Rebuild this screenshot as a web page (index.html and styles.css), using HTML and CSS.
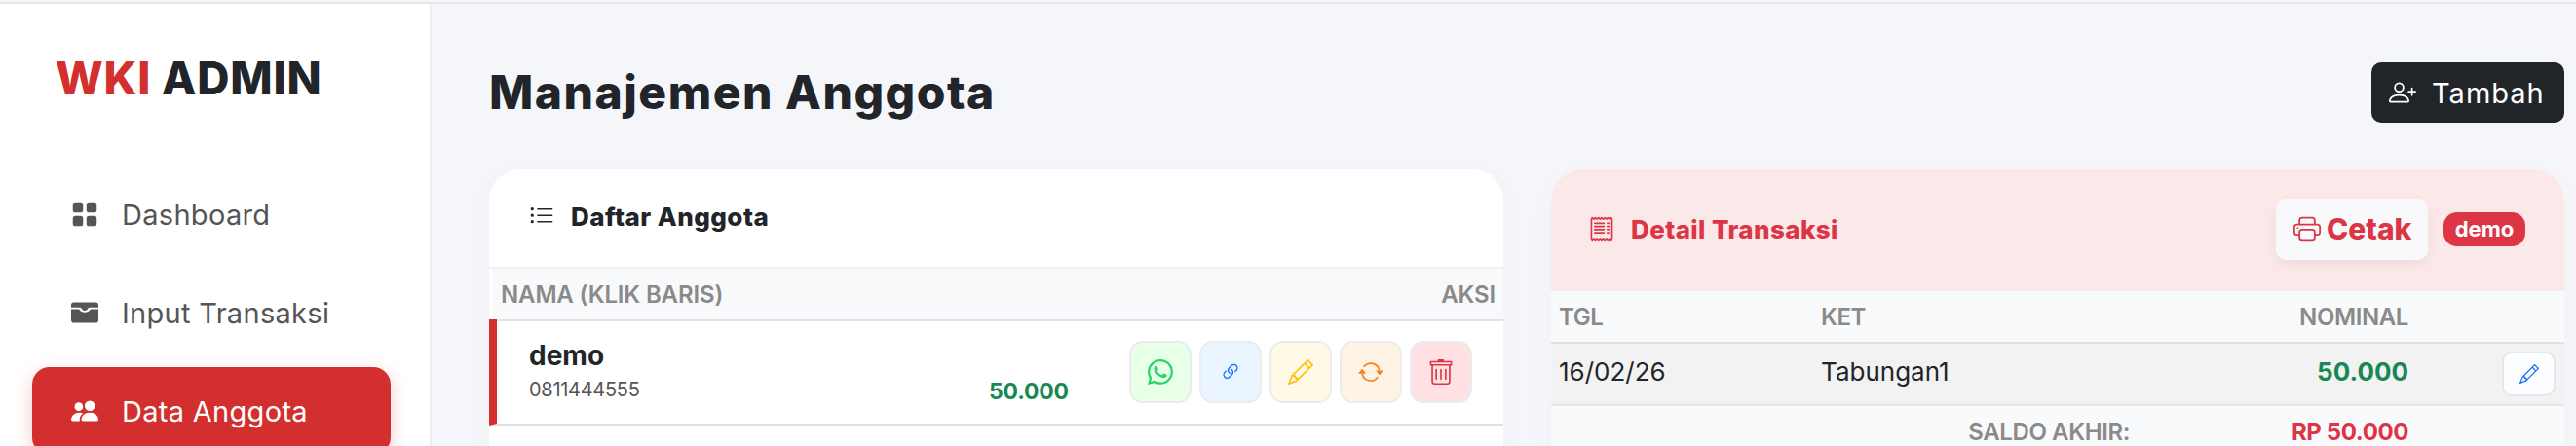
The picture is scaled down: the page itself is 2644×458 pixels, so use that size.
FILE: index.html
```html
<!DOCTYPE html>
<html lang="id">
<head>
<meta charset="utf-8">
<title>Manajemen Anggota</title>
<link rel="stylesheet" href="styles.css">
</head>
<body>
<div class="app">
  <aside class="sidebar">
    <div class="logo"><span class="logo-red">WKI</span> ADMIN</div>
    <nav class="nav">
      <a class="nav-item">
        <svg class="nav-icon" viewBox="0 0 16 16"><path d="M1 2.5A1.5 1.5 0 0 1 2.5 1h3A1.5 1.5 0 0 1 7 2.5v3A1.5 1.5 0 0 1 5.5 7h-3A1.5 1.5 0 0 1 1 5.5zm8 0A1.5 1.5 0 0 1 10.5 1h3A1.5 1.5 0 0 1 15 2.5v3A1.5 1.5 0 0 1 13.5 7h-3A1.5 1.5 0 0 1 9 5.5zm-8 8A1.5 1.5 0 0 1 2.5 9h3A1.5 1.5 0 0 1 7 10.5v3A1.5 1.5 0 0 1 5.5 15h-3A1.5 1.5 0 0 1 1 13.5zm8 0A1.5 1.5 0 0 1 10.5 9h3a1.5 1.5 0 0 1 1.5 1.5v3a1.5 1.5 0 0 1-1.5 1.5h-3A1.5 1.5 0 0 1 9 13.5z"/></svg>
        <span>Dashboard</span>
      </a>
      <a class="nav-item">
        <svg class="nav-icon" viewBox="0 0 16 16"><path d="M1.6 2h12.8A1.6 1.6 0 0 1 16 3.6V5h-5.2c-.4 0-.7.2-.9.6-.3.8-1 1.2-1.9 1.2s-1.6-.4-1.9-1.2C5.9 5.2 5.600 5 5.200 5H0V3.600A1.600 1.600 0 0 1 1.600 2zM0 6h4.700c.6 1.200 1.900 1.900 3.300 1.900s2.700-.7 3.300-1.900H16v6.400a1.600 1.600 0 0 1-1.600 1.600H1.600A1.600 1.600 0 0 1 0 12.400z"/></svg>
        <span>Input Transaksi</span>
      </a>
      <a class="nav-item nav-active">
        <svg class="nav-icon" viewBox="0 0 16 16"><path d="M7 14s-1 0-1-1 1-4 5-4 5 3 5 4-1 1-1 1zm4-6a3 3 0 1 0 0-6 3 3 0 0 0 0 6m-5.784 6A2.24 2.24 0 0 1 5 13c0-1.355.68-2.75 1.936-3.72A6.3 6.3 0 0 0 5 9c-4 0-5 3-5 4s1 1 1 1zM4.500 8a2.500 2.500 0 1 0 0-5 2.500 2.500 0 0 0 0 5"/></svg>
        <span>Data Anggota</span>
      </a>
    </nav>
  </aside>
  <main class="main">
    <header class="page-head">
      <h1 class="page-title">Manajemen Anggota</h1>
      <button class="btn-add">
        <svg class="add-icon" viewBox="0 0 16 16"><path d="M6 8a3 3 0 1 0 0-6 3 3 0 0 0 0 6m2-3a2 2 0 1 1-4 0 2 2 0 0 1 4 0m4 8c0 1-1 1-1 1H1s-1 0-1-1 1-4 6-4 6 3 6 4m-1-.004c-.001-.246-.154-.986-.832-1.664C9.516 10.68 8.289 10 6 10s-3.516.68-4.168 1.332c-.678.678-.83 1.418-.832 1.664z"/><path d="M13.500 5a.5.5 0 0 1 .5.5V7h1.500a.5.5 0 0 1 0 1H14v1.500a.5.5 0 0 1-1 0V8h-1.500a.5.5 0 0 1 0-1H13V5.500a.5.5 0 0 1 .5-.5"/></svg>
        <span>Tambah</span>
      </button>
    </header>
    <div class="columns">
      <section class="card">
        <div class="member-head">
          <svg class="list-icon" viewBox="0 0 16 16"><path d="M5 11.500a.5.5 0 0 1 .5-.5h9a.5.5 0 0 1 0 1h-9a.5.5 0 0 1-.5-.5m0-4a.5.5 0 0 1 .5-.5h9a.5.5 0 0 1 0 1h-9a.5.5 0 0 1-.5-.5m0-4a.5.5 0 0 1 .5-.5h9a.5.5 0 0 1 0 1h-9a.5.5 0 0 1-.5-.5m-3 1a1 1 0 1 0 0-2 1 1 0 0 0 0 2m0 4a1 1 0 1 0 0-2 1 1 0 0 0 0 2m0 4a1 1 0 1 0 0-2 1 1 0 0 0 0 2"/></svg>
          <h2 class="member-title">Daftar Anggota</h2>
        </div>
        <div class="member-thead">
          <span class="th">NAMA (KLIK BARIS)</span>
          <span class="th">AKSI</span>
        </div>
        <div class="member-row">
          <div class="member-id">
            <div class="member-name">demo</div>
            <div class="member-phone">0811444555</div>
          </div>
          <div class="member-amount">50.000</div>
          <div class="actions">
            <button class="act act-wa"><svg class="act-icon" viewBox="0 0 16 16"><path d="M13.601 2.326A7.85 7.85 0 0 0 7.994 0C3.627 0 .068 3.558.064 7.926c0 1.399.366 2.76 1.057 3.965L0 16l4.204-1.102a7.9 7.9 0 0 0 3.79.965h.004c4.368 0 7.926-3.558 7.93-7.93A7.9 7.9 0 0 0 13.6 2.326zM7.994 14.521a6.600 6.600 0 0 1-3.356-.92l-.24-.144-2.494.654.666-2.433-.156-.251a6.560 6.560 0 0 1-1.007-3.505c0-3.626 2.957-6.584 6.591-6.584a6.560 6.560 0 0 1 4.660 1.931 6.560 6.560 0 0 1 1.928 4.660c-.004 3.639-2.961 6.592-6.592 6.592m3.615-4.934c-.197-.099-1.17-.578-1.353-.646-.182-.065-.315-.099-.445.099-.133.197-.513.646-.627.775-.114.133-.232.148-.43.05-.197-.1-.836-.308-1.592-.985-.59-.525-.985-1.175-1.103-1.372-.114-.198-.011-.304.088-.403.087-.088.197-.232.296-.346.1-.114.133-.198.198-.33.065-.134.034-.248-.015-.347-.05-.099-.445-1.076-.612-1.47-.16-.389-.323-.335-.445-.34-.114-.007-.247-.007-.38-.007a.73.73 0 0 0-.529.247c-.182.198-.691.677-.691 1.654s.71 1.916.81 2.049c.098.133 1.394 2.132 3.383 2.992.47.205.84.326 1.129.418.475.152.904.129 1.246.08.38-.058 1.171-.48 1.338-.943.164-.464.164-.86.114-.943-.049-.084-.182-.133-.38-.232"/></svg></button>
            <button class="act act-link"><svg class="act-icon" viewBox="0 0 16 16"><path d="M4.715 6.542 3.343 7.914a3 3 0 1 0 4.243 4.243l1.828-1.829A3 3 0 0 0 8.586 5.500L8 6.086a1 1 0 0 0-.154.199 2 2 0 0 1 .861 3.337L6.88 11.450a2 2 0 1 1-2.830-2.830l.793-.792a4 4 0 0 1-.128-1.287z"/><path d="M6.586 4.672A3 3 0 0 0 7.414 9.500l.775-.776a2 2 0 0 1-.896-3.346L9.120 3.550a2 2 0 1 1 2.830 2.830l-.793.792c.112.42.155.855.128 1.287l1.372-1.372a3 3 0 1 0-4.243-4.243z"/></svg></button>
            <button class="act act-edit"><svg class="act-icon" viewBox="0 0 16 16"><path d="M12.146.146a.5.5 0 0 1 .708 0l3 3a.5.5 0 0 1 0 .708l-10 10a.5.5 0 0 1-.168.11l-5 2a.5.5 0 0 1-.65-.65l2-5a.5.5 0 0 1 .11-.168zM11.207 2.500 13.500 4.793 14.793 3.500 12.500 1.207zm1.586 3L10.500 3.207 4 9.707V10h.5a.5.5 0 0 1 .5.5v.5h.5a.5.5 0 0 1 .5.5v.5h.293zm-9.761 5.175-.106.106-1.528 3.821 3.821-1.528.106-.106A.5.5 0 0 1 5 12.500V12h-.5a.5.5 0 0 1-.5-.5V11h-.5a.5.5 0 0 1-.468-.325"/></svg></button>
            <button class="act act-sync"><svg class="act-icon" viewBox="0 0 16 16"><path d="M11.534 7h3.932a.25.25 0 0 1 .192.41l-1.966 2.360a.25.25 0 0 1-.384 0l-1.966-2.360a.25.25 0 0 1 .192-.41m-11 2h3.932a.25.25 0 0 0 .192-.41L2.692 6.230a.25.25 0 0 0-.384 0L.342 8.590A.25.25 0 0 0 .534 9"/><path d="M8 3c-1.552 0-2.940.707-3.857 1.818a.5.5 0 1 1-.771-.636A6.002 6.002 0 0 1 13.917 7H12.900A5 5 0 0 0 8 3M3.100 9a5.002 5.002 0 0 0 8.757 2.182.5.5 0 1 1 .771.636A6.002 6.002 0 0 1 2.083 9z"/></svg></button>
            <button class="act act-del"><svg class="act-icon" viewBox="0 0 16 16"><path d="M6.500 0h3a.5.5 0 0 1 .5.5V1h4.500a.5.5 0 0 1 .5.5v2a.5.5 0 0 1-.5.5H14v10a2 2 0 0 1-2 2H4a2 2 0 0 1-2-2V4h-.5a.5.5 0 0 1-.5-.5v-2a.5.5 0 0 1 .5-.5H6v-.5a.5.5 0 0 1 .5-.5M2 2v1h12V2zm1 2v10a1 1 0 0 0 1 1h8a1 1 0 0 0 1-1V4zm2 2a.5.5 0 0 1 .5.5v6a.5.5 0 0 1-1 0v-6A.5.5 0 0 1 5 6m3 0a.5.5 0 0 1 .5.5v6a.5.5 0 0 1-1 0v-6A.5.5 0 0 1 8 6m3 0a.5.5 0 0 1 .5.5v6a.5.5 0 0 1-1 0v-6A.5.5 0 0 1 11 6"/></svg></button>
          </div>
        </div>
      </section>
      <section class="card">
        <div class="detail-head">
          <svg class="receipt-icon" viewBox="0 0 16 16"><path d="M1.920.506a.5.5 0 0 1 .434.14L3 1.293l.646-.647a.5.5 0 0 1 .708 0L5 1.293l.646-.647a.5.5 0 0 1 .708 0L7 1.293l.646-.647a.5.5 0 0 1 .708 0L9 1.293l.646-.647a.5.5 0 0 1 .708 0l.646.647.646-.647a.5.5 0 0 1 .708 0l.646.647.646-.647a.5.5 0 0 1 .801.13l.5 1A.5.5 0 0 1 15 2v12a.5.5 0 0 1-.053.224l-.5 1a.5.5 0 0 1-.8.13L13 14.707l-.646.647a.5.5 0 0 1-.708 0L11 14.707l-.646.647a.5.5 0 0 1-.708 0L9 14.707l-.646.647a.5.5 0 0 1-.708 0L7 14.707l-.646.647a.5.5 0 0 1-.708 0L5 14.707l-.646.647a.5.5 0 0 1-.708 0L3 14.707l-.646.647a.5.5 0 0 1-.801-.13l-.5-1A.5.5 0 0 1 1 14V2a.5.5 0 0 1 .053-.224l.5-1a.5.5 0 0 1 .367-.27m.217 1.338L2 2.118v11.764l.137.274.51-.51a.5.5 0 0 1 .707 0l.646.647.646-.646a.5.5 0 0 1 .708 0l.646.646.646-.646a.5.5 0 0 1 .708 0l.646.646.646-.646a.5.5 0 0 1 .708 0l.646.646.646-.646a.5.5 0 0 1 .708 0l.646.646.646-.646a.5.5 0 0 1 .708 0l.509.509.137-.274V2.118l-.137-.274-.51.51a.5.5 0 0 1-.707 0L12 1.707l-.646.647a.5.5 0 0 1-.708 0L10 1.707l-.646.647a.5.5 0 0 1-.708 0L8 1.707l-.646.647a.5.5 0 0 1-.708 0L6 1.707l-.646.647a.5.5 0 0 1-.708 0L4 1.707l-.646.647a.5.5 0 0 1-.708 0z"/><path d="M3 4.500a.5.5 0 0 1 .5-.5h6a.5.5 0 1 1 0 1h-6a.5.5 0 0 1-.5-.5m0 2a.5.5 0 0 1 .5-.5h6a.5.5 0 1 1 0 1h-6a.5.5 0 0 1-.5-.5m0 2a.5.5 0 0 1 .5-.5h6a.5.5 0 1 1 0 1h-6a.5.5 0 0 1-.5-.5m0 2a.5.5 0 0 1 .5-.5h6a.5.5 0 0 1 0 1h-6a.5.5 0 0 1-.5-.5m8-6a.5.5 0 0 1 .5-.5h1a.5.5 0 0 1 0 1h-1a.5.5 0 0 1-.5-.5m0 2a.5.5 0 0 1 .5-.5h1a.5.5 0 0 1 0 1h-1a.5.5 0 0 1-.5-.5m0 2a.5.5 0 0 1 .5-.5h1a.5.5 0 0 1 0 1h-1a.5.5 0 0 1-.5-.5m0 2a.5.5 0 0 1 .5-.5h1a.5.5 0 0 1 0 1h-1a.5.5 0 0 1-.5-.5"/></svg>
          <h2 class="detail-title">Detail Transaksi</h2>
          <button class="btn-print">
            <svg class="print-icon" viewBox="0 0 16 16"><path d="M2.500 8a.5.5 0 1 0 0-1 .5.5 0 0 0 0 1"/><path d="M5 1a2 2 0 0 0-2 2v2H2a2 2 0 0 0-2 2v3a2 2 0 0 0 2 2h1v1a2 2 0 0 0 2 2h6a2 2 0 0 0 2-2v-1h1a2 2 0 0 0 2-2V7a2 2 0 0 0-2-2h-1V3a2 2 0 0 0-2-2zM4 3a1 1 0 0 1 1-1h6a1 1 0 0 1 1 1v2H4zm1 5a2 2 0 0 0-2 2v1H2a1 1 0 0 1-1-1V7a1 1 0 0 1 1-1h12a1 1 0 0 1 1 1v3a1 1 0 0 1-1 1h-1v-1a2 2 0 0 0-2-2zm7 2v3a1 1 0 0 1-1 1H5a1 1 0 0 1-1-1v-3a1 1 0 0 1 1-1h6a1 1 0 0 1 1 1"/></svg>
            <span>Cetak</span>
          </button>
          <span class="badge">demo</span>
        </div>
        <div class="tx-grid tx-thead">
          <span class="th tx-th">TGL</span>
          <span class="th tx-th">KET</span>
          <span class="th tx-th tx-right">NOMINAL</span>
          <span></span>
        </div>
        <div class="tx-grid tx-row">
          <span class="tx-text">16/02/26</span>
          <span class="tx-text">Tabungan1</span>
          <span class="tx-amount tx-right">50.000</span>
          <span class="tx-edit-cell">
            <button class="btn-edit"><svg class="edit-icon" viewBox="0 0 16 16"><path d="M12.146.146a.5.5 0 0 1 .708 0l3 3a.5.5 0 0 1 0 .708l-10 10a.5.5 0 0 1-.168.11l-5 2a.5.5 0 0 1-.65-.65l2-5a.5.5 0 0 1 .11-.168zM11.207 2.500 13.500 4.793 14.793 3.500 12.500 1.207zm1.586 3L10.500 3.207 4 9.707V10h.5a.5.5 0 0 1 .5.5v.5h.5a.5.5 0 0 1 .5.5v.5h.293zm-9.761 5.175-.106.106-1.528 3.821 3.821-1.528.106-.106A.5.5 0 0 1 5 12.500V12h-.5a.5.5 0 0 1-.5-.5V11h-.5a.5.5 0 0 1-.468-.325"/></svg></button>
          </span>
        </div>
        <div class="tx-foot">
          <span class="th tx-th saldo-label">SALDO AKHIR:</span>
          <span class="saldo-value">RP 50.000</span>
        </div>
      </section>
    </div>
  </main>
</div>
</body>
</html>
```

FILE: styles.css
```css
* { box-sizing: border-box; }
html, body { margin: 0; height: 100%; overflow: hidden; }
body {
  font-family: "Inter", "Noto Sans", sans-serif;
  color: #212529;
  background: #f5f6fa;
}
h1, h2 { margin: 0; }
button { font-family: inherit; cursor: pointer; padding: 0; }
svg { fill: currentColor; display: block; flex: none; }

.app {
  display: flex;
  height: 458px;
  overflow: hidden;
  border-top: 2px solid #e4e4ec;
  margin-top: 2px;
}

/* sidebar */
.sidebar {
  width: 443px;
  flex: none;
  background: #fff;
  border-right: 2px solid #eeeef2;
  padding: 51px 40px 0 33px;
}
.logo {
  font-size: 46px;
  line-height: 50px;
  font-weight: 800;
  letter-spacing: .8px;
  padding-left: 24px;
  white-space: nowrap;
}
.logo-red { color: #d32f2f; }
.nav { display: flex; flex-direction: column; gap: 11px; margin-top: 70px; }
.nav-item {
  height: 90px;
  display: flex;
  align-items: center;
  gap: 24px;
  padding-left: 40px;
  border-radius: 18px;
  font-size: 29px;
  letter-spacing: .3px;
  color: #555;
}
.nav-icon { width: 28px; height: 28px; }
.nav-active {
  background: #d32f2f;
  color: #fff;
  box-shadow: 0 6px 18px rgba(211, 47, 47, .25);
}

/* main */
.main { flex: 1; min-width: 0; padding: 60px 12px 0 59px; }
.page-head { display: flex; align-items: center; justify-content: space-between; height: 62px; }
.page-title { font-size: 48px; line-height: 62px; font-weight: 800; letter-spacing: 1.5px; }
.btn-add {
  display: flex;
  align-items: center;
  gap: 16px;
  width: 198px;
  height: 62px;
  padding-left: 18px;
  border: 0;
  border-radius: 10px;
  background: #212529;
  color: #fff;
  font-size: 29px;
  letter-spacing: 1px;
}
.add-icon { width: 28px; height: 28px; }

.columns {
  display: grid;
  grid-template-columns: 1041px 1040px;
  column-gap: 49px;
  margin-top: 48px;
}
.card {
  height: 300px;
  background: #fff;
  border-radius: 32px 32px 0 0;
  overflow: hidden;
  box-shadow: 0 8px 40px rgba(0, 0, 0, .02);
}
.th { font-size: 24px; font-weight: 600; letter-spacing: -.15px; color: #8a8a8a; white-space: nowrap; }
.tx-th { letter-spacing: -.4px; }

/* member list */
.member-head {
  display: flex;
  align-items: center;
  gap: 17px;
  height: 102px;
  padding: 0 0 4px 41px;
  border-bottom: 2px solid #f1f2f4;
}
.list-icon { width: 26px; height: 26px; }
.member-title { font-size: 26px; font-weight: 800; letter-spacing: .45px; }
.member-thead {
  display: flex;
  align-items: center;
  justify-content: space-between;
  height: 54px;
  margin-left: 4px;
  padding: 0 8px 0 8px;
  background: #f8f9fa;
  border-bottom: 2px solid #dee2e6;
}
.member-row {
  display: flex;
  align-items: center;
  height: 109px;
  margin-top: -2px;
  padding: 0 31px 0 33px;
  border-left: 8px solid #d32f2f;
  border-bottom: 2px solid #dee2e6;
}
.member-id { width: 472px; padding-bottom: 3px; }
.member-name { font-size: 28px; font-weight: 700; line-height: 40px; }
.member-phone { font-size: 20px; letter-spacing: -.3px; color: #555; line-height: 30px; }
.member-amount {
  width: 79px;
  margin: 40px 65px 0 0;
  font-size: 23px;
  font-weight: 700;
  letter-spacing: -.2px;
  color: #198754;
  white-space: nowrap;
}
.actions { display: flex; gap: 8px; }
.act {
  width: 64px;
  height: 64px;
  display: flex;
  align-items: center;
  justify-content: center;
  border: 2px solid #ebecee;
  border-radius: 14px;
}
.act-icon { width: 26px; height: 26px; }
.act-wa { background: #e8ffe8; color: #25d366; }
.act-link { background: #ebf5ff; color: #0d6efd; }
.act-link .act-icon { width: 22px; height: 22px; }
.act-edit { background: #fffae6; color: #ffc107; }
.act-sync { background: #fff3e6; color: #fd7e14; }
.act-del { background: #ffe0e3; color: #dc3545; }

/* detail */
.detail-head {
  display: flex;
  align-items: center;
  height: 125px;
  padding: 0 40px 3px 39px;
  background: #fbe9ea;
  color: #dc3545;
}
.receipt-icon { width: 26px; height: 26px; }
.detail-title { font-size: 26px; font-weight: 800; margin-left: 17px; letter-spacing: .4px; }
.btn-print {
  display: flex;
  align-items: center;
  gap: 6px;
  width: 156px;
  height: 63px;
  margin-left: auto;
  padding-left: 18px;
  border: 0;
  border-radius: 10px;
  background: #f8f9fa;
  color: #dc3545;
  font-size: 30px;
  font-weight: 800;
  box-shadow: 0 4px 12px rgba(0, 0, 0, .06);
}
.print-icon { width: 28px; height: 28px; }
.badge {
  width: 84px;
  height: 35px;
  margin-left: 16px;
  border-radius: 14px;
  background: #dc3545;
  color: #fff;
  font-size: 22px;
  font-weight: 700;
  line-height: 34px;
  text-align: center;
}
.tx-grid {
  display: grid;
  grid-template-columns: 269px 1fr 160px 160px;
  align-items: center;
  padding-left: 8px;
}
.tx-thead { height: 54px; background: #f9fafc; border-bottom: 2px solid #dee2e6; }
.tx-row { height: 64px; background: #f2f2f2; border-bottom: 2px solid #e3e5e9; }
.tx-right { text-align: right; }
.tx-text { font-size: 26px; padding-bottom: 6px; color: #212529; }
.tx-amount { font-size: 26px; font-weight: 700; padding-bottom: 6px; color: #198754; }
.tx-edit-cell { display: flex; justify-content: flex-end; padding-right: 9px; }
.btn-edit {
  width: 55px;
  height: 46px;
  display: flex;
  align-items: center;
  justify-content: center;
  border: 2px solid #e3e7ee;
  border-radius: 10px;
  background: #fcfdff;
  color: #0d6efd;
}
.edit-icon { width: 20px; height: 20px; }
.tx-foot {
  display: flex;
  justify-content: flex-end;
  align-items: center;
  height: 70px;
  padding: 0 160px 18px 0;
  background: #f9fafc;
}
.saldo-label { margin-right: 166px; }
.saldo-value { font-size: 24px; font-weight: 700; letter-spacing: -.4px; color: #dc3545; white-space: nowrap; }
```
